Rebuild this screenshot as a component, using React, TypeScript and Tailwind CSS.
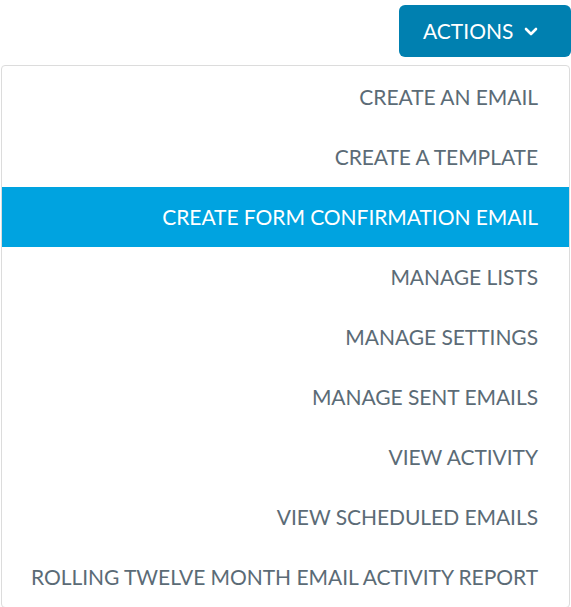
const items = [
  'CREATE AN EMAIL',
  'CREATE A TEMPLATE',
  'CREATE FORM CONFIRMATION EMAIL',
  'MANAGE LISTS',
  'MANAGE SETTINGS',
  'MANAGE SENT EMAILS',
  'VIEW ACTIVITY',
  'VIEW SCHEDULED EMAILS',
  'ROLLING TWELVE MONTH EMAIL ACTIVITY REPORT',
];

function App() {
  return (
    <div
      className="min-h-screen bg-white flex flex-col items-end overflow-hidden"
      style={{ fontFamily: 'Lato, "Open Sans", sans-serif' }}
    >
      <button className="mt-[5px] h-[52px] w-[172px] rounded-md bg-[#0080b0] text-white text-[21px] flex items-center justify-start gap-[11px] pl-[24px]">
        <span>ACTIONS</span>
        <svg width="14" height="9" viewBox="0 0 14 9" fill="none" className="mt-[1px]">
          <polyline points="2,2 7,7 12,2" stroke="white" strokeWidth="2.6" strokeLinecap="round" strokeLinejoin="round" />
        </svg>
      </button>

      <div className="mt-[8px] ml-[1px] mr-[1px] self-stretch bg-white border border-[#dcdcdc] rounded-[4px] pt-[1px]">
        {items.map((item, i) => (
          <div
            key={item}
            className={`h-[60px] flex items-center justify-end pr-[31px] text-[21px] tracking-[-0.05px] ${
              i === 2 ? 'bg-[#00a3e0] text-white' : 'text-[#5b6b76]'
            }`}
          >
            {item}
          </div>
        ))}
      </div>
    </div>
  );
}

export default App;
